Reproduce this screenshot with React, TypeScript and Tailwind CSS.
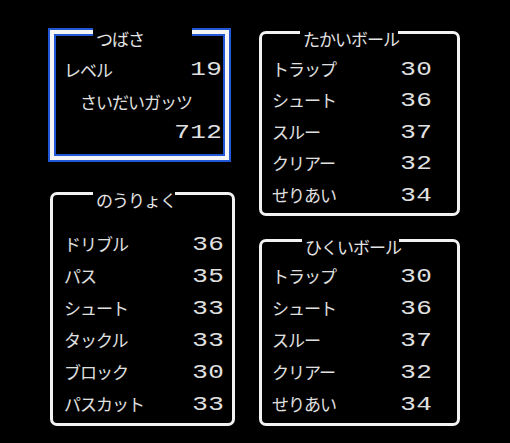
import React from "react";

// ステータス画面（ファミコン風）
const KANA = { fontFamily: '"Noto Sans CJK JP", "Noto Sans", sans-serif' };
const DIGIT = { fontFamily: '"Liberation Mono", "DejaVu Sans Mono", monospace' };

type Stat = [string, number];

const nouryoku: Stat[] = [
  ["ドリブル", 36],
  ["パス", 35],
  ["シュート", 33],
  ["タックル", 33],
  ["ブロック", 30],
  ["パスカット", 33],
];

const takai: Stat[] = [
  ["トラップ", 30],
  ["シュート", 36],
  ["スルー", 37],
  ["クリアー", 32],
  ["せりあい", 34],
];

const hikui: Stat[] = [
  ["トラップ", 30],
  ["シュート", 36],
  ["スルー", 37],
  ["クリアー", 32],
  ["せりあい", 34],
];

// 数字は1文字ずつ16pxのマスに置く
const Num = ({ value }: { value: number | string }) => (
  <span className="inline-flex" style={DIGIT}>
    {String(value)
      .split("")
      .map((c, i) => (
        <span
          key={i}
          className="inline-block w-4 text-center text-[20px] leading-none scale-x-[1.3]"
        >
          {c}
        </span>
      ))}
  </span>
);

// かな・カナは17pxで字間を詰めて16pxマスに合わせる
const Kana = ({ children }: { children: React.ReactNode }) => (
  <span className="whitespace-nowrap text-[17px] leading-none tracking-[-1px]" style={KANA}>
    {children}
  </span>
);

// 枠の上に乗るタイトル
const Title = ({ text, left, width }: { text: string; left: string; width: string }) => (
  <div
    className={`absolute top-[-9px] h-[20px] bg-black pt-[3px] pl-[3px] whitespace-nowrap text-[#e4e4e4] ${left} ${width}`}
  >
    <Kana>{text}</Kana>
  </div>
);

const StatBox = ({
  title,
  stats,
  className,
  titleLeft,
  titleWidth,
  rowClass,
}: {
  title: string;
  stats: Stat[];
  className: string;
  titleLeft: string;
  titleWidth: string;
  rowClass: string;
}) => (
  <div
    className={`relative rounded-[7px] border-[3px] border-[#f2f2f2] bg-black flex flex-col ${className}`}
  >
    <Title text={title} left={titleLeft} width={titleWidth} />
    {stats.map(([label, v]) => (
      <div key={label} className={`flex items-center text-[#e0e0e0] ${rowClass}`}>
        <span className="w-[128px]">
          <Kana>{label}</Kana>
        </span>
        <Num value={v} />
      </div>
    ))}
  </div>
);

export default function App() {
  return (
    <div className="w-[510px] h-[443px] bg-black overflow-hidden flex gap-[24px] pl-[50px] pt-[30px]">
      {/* 左列 */}
      <div className="w-[185px] flex flex-col gap-[32px]">
        {/* つばさ */}
        <div className="relative w-[179px] h-[130px] border-4 border-[#f4f4f4] bg-black shadow-[0_0_0_2px_#2156d6,inset_0_0_0_2px_#2156d6] flex flex-col pt-[20px] pr-[3px]">
          <Title text="つばさ" left="left-[39px]" width="w-[99px]" />
          <div className="h-[31.5px] flex items-center justify-between pl-[10px] text-[#e0e0e0]">
            <Kana>レベル</Kana>
            <Num value={19} />
          </div>
          <div className="h-[31.5px] flex items-center pl-[26px] text-[#e0e0e0]">
            <Kana>さいだいガッツ</Kana>
          </div>
          <div className="h-[31.5px] flex items-center justify-end text-[#e0e0e0]">
            <Num value={712} />
          </div>
        </div>

        <StatBox
          title="のうりょく"
          stats={nouryoku}
          className="w-[185px] h-[234px] pt-[34px] pl-[11px]"
          titleLeft="left-[40px]"
          titleWidth="w-[82px]"
          rowClass="h-[32px]"
        />
      </div>

      {/* 右列 */}
      <div className="w-[201px] flex flex-col gap-[23px] pt-[1px]">
        <StatBox
          title="たかいボール"
          stats={takai}
          className="h-[185px] pt-[20px] pl-[10px]"
          titleLeft="left-[38px]"
          titleWidth="w-[98px]"
          rowClass="h-[31.5px]"
        />
        <StatBox
          title="ひくいボール"
          stats={hikui}
          className="h-[187px] pt-[19px] pl-[10px]"
          titleLeft="left-[40px]"
          titleWidth="w-[97px]"
          rowClass="h-[32px]"
        />
      </div>
    </div>
  );
}
